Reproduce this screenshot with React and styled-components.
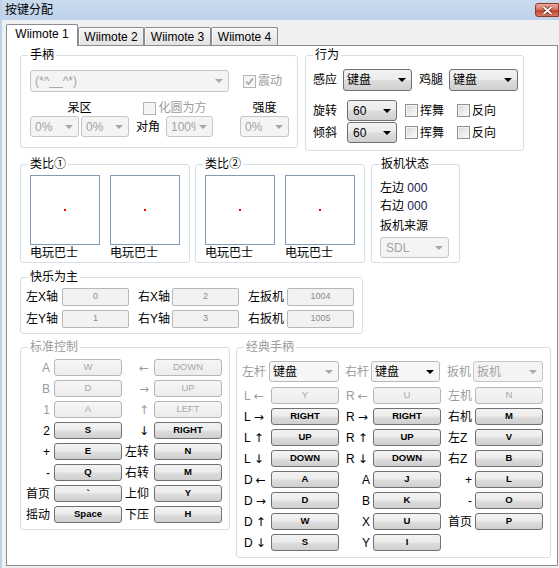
import styled, { createGlobalStyle, css } from 'styled-components'

/* FONT */
const font = `"Liberation Sans", "Noto Sans CJK SC", sans-serif`

/* GLOBAL */
const GlobalStyle = createGlobalStyle`
  html, body {
    margin: 0;
    padding: 0;
    background: #f0f0f0;
  }
  body {
    font-family: ${font};
    font-size: 12px;
    color: #000;
  }
`

/* SHARED OFFSETS */
const offsets = css`
  margin-left: ${({ $ml }) => $ml || 0}px;
  margin-top: ${({ $mt }) => $mt || 0}px;
`

const dimText = '#9c9c9c'

/* WINDOW */
const Window = styled.div`
  width: 559px;
  height: 568px;
  box-sizing: border-box;
  border-left: 2px solid #bcd3ec;
  background: #f0f0f0;
  display: flex;
  flex-direction: column;
  overflow: hidden;
`

/* TITLE BAR */
const TitleBar = styled.div`
  height: 20px;
  flex: none;
  display: flex;
  justify-content: space-between;
  background: linear-gradient(#c9dbef, #bed2ea);
  padding-left: 3px;
`

const TitleText = styled.span`
  line-height: 20px;
  font-size: 12px;
  color: #000;
`

const CloseButton = styled.div`
  width: 24px;
  height: 14px;
  margin-top: 3px;
  box-sizing: border-box;
  border: 1px solid #8a3a31;
  border-radius: 3px 0 0 3px;
  background: linear-gradient(#eaa99b 0%, #d8715e 48%, #c4432d 52%, #d5785f 100%);
  display: flex;
  align-items: center;
  justify-content: center;
`

/* BODY & TABS */
const Body = styled.div`
  flex: 1;
  padding: 4px 0 0 4px;
  display: flex;
  flex-direction: column;
`

const TabStrip = styled.div`
  height: 21px;
  display: flex;
  align-items: flex-end;
  position: relative;
  z-index: 1;
`

const Tab = styled.div`
  box-sizing: border-box;
  width: ${({ $w }) => $w}px;
  height: ${({ $active }) => ($active ? 22 : 18)}px;
  margin-bottom: ${({ $active }) => ($active ? -1 : 0)}px;
  border: 1px solid #898c95;
  border-bottom: none;
  border-radius: 2px 2px 0 0;
  background: ${({ $active }) =>
    $active ? '#fff' : 'linear-gradient(#f4f4f4, #e3e3e3)'};
  box-shadow: ${({ $active }) => ($active ? 'none' : 'inset 1px 1px 0 #fcfcfc')};
  display: flex;
  align-items: center;
  justify-content: center;
  padding-bottom: ${({ $active }) => ($active ? 3 : 0)}px;
  font-size: 12px;
  line-height: 14px;
`

const TabPanel = styled.div`
  width: 552px;
  height: 521px;
  box-sizing: border-box;
  border: 1px solid #898c95;
  background: #fff;
  padding: 9px 0 0 13px;
  display: flex;
  flex-direction: column;
  position: relative;
`

/* ROWS OF GROUPS */
const Row = styled.div`
  display: flex;
  align-items: flex-start;
  gap: ${({ $gap }) => $gap || 0}px;
  ${offsets}
`

/* GROUP BOX */
const Group = styled.div`
  position: relative;
  box-sizing: border-box;
  flex: none;
  width: ${({ $w }) => $w}px;
  height: ${({ $h }) => $h}px;
  border: 1px solid #d5dfe5;
  border-radius: 3px;
  padding-left: ${({ $pl }) => $pl || 0}px;
  ${offsets}
`

const GroupTitle = styled.span`
  position: absolute;
  top: -8px;
  left: 7px;
  padding: 0 2px;
  background: #fff;
  font-size: 12px;
  line-height: 14px;
  color: ${({ $dim }) => ($dim ? dimText : '#000')};
`

/* LINE */
const Line = styled.div`
  display: flex;
  align-items: center;
  ${offsets}
`

/* LABEL */
const Label = styled.span`
  flex: none;
  font-size: 12px;
  line-height: 14px;
  white-space: nowrap;
  color: ${({ $dim }) => ($dim ? dimText : '#000')};
  width: ${({ $w }) => ($w ? `${$w}px` : 'auto')};
  ${offsets}
`

/* CELL */
const Cell = styled.div`
  flex: none;
  width: ${({ $w }) => $w}px;
  display: flex;
  justify-content: center;
  ${offsets}
`

/* COMBO */
const looks = {
  on: {
    border: '#707070',
    bg: 'linear-gradient(#f2f2f2 0%, #ebebeb 48%, #dddddd 52%, #cfcfcf 100%)',
    color: '#000',
  },
  off: { border: '#c6c6c6', bg: '#f4f4f4', color: '#a3a3a3' },
  soft: { border: '#b9b9b9', bg: '#f6f6f6', color: '#000' },
}

const Combo = styled.div`
  flex: none;
  box-sizing: border-box;
  width: ${({ $w }) => $w}px;
  height: ${({ $h }) => $h || 21}px;
  border: 1px solid ${({ $look }) => looks[$look].border};
  border-radius: 3px;
  background: ${({ $look }) => looks[$look].bg};
  color: ${({ $look }) => looks[$look].color};
  display: flex;
  align-items: center;
  padding: 0 5px 0 ${({ $pad }) => $pad || 3}px;
  font-size: 12px;
  line-height: 14px;
  ${offsets}
`

const ComboText = styled.span`
  flex: 1;
  min-width: 0;
  overflow: hidden;
  white-space: nowrap;
`

const Arrow = styled.span`
  flex: none;
  width: 0;
  height: 0;
  margin-left: 3px;
  border-left: 4px solid transparent;
  border-right: 4px solid transparent;
  border-top: 4px solid ${({ $c }) => $c};
`

/* CHECKBOX */
const CheckItem = styled.div`
  flex: none;
  display: flex;
  align-items: center;
  gap: 2px;
  color: ${({ $dim }) => ($dim ? dimText : '#000')};
  font-size: 12px;
  line-height: 14px;
  ${offsets}
`

const CheckBox = styled.span`
  width: 13px;
  height: 13px;
  box-sizing: border-box;
  border: 1px solid ${({ $dim }) => ($dim ? '#b4b4b4' : '#8e8f8f')};
  background: ${({ $dim }) =>
    $dim ? '#f4f4f4' : 'linear-gradient(135deg, #d6d6d6 0%, #eeeeee 60%, #fbfbfb 100%)'};
  box-shadow: inset 0 0 0 1px ${({ $dim }) => ($dim ? '#f7f7f7' : '#f4f4f4')};
  display: flex;
  align-items: center;
  justify-content: center;
`

/* ANALOG */
const AnalogRow = styled.div`
  display: flex;
  gap: 10px;
  padding: 10px 0 0 9px;
`

const AnalogCol = styled.div`
  display: flex;
  flex-direction: column;
`

const AnalogBox = styled.div`
  width: 70px;
  height: 70px;
  box-sizing: border-box;
  border: 1px solid #7f9db9;
  display: flex;
  align-items: center;
  justify-content: center;
`

const Dot = styled.span`
  width: 2px;
  height: 2px;
  background: #ff0000;
`

const Caption = styled.span`
  margin-top: 1px;
  font-size: 12px;
  line-height: 14px;
`

/* TRIGGER STATUS */
const StatusBody = styled.div`
  display: flex;
  flex-direction: column;
  align-items: flex-start;
  padding: 14px 0 0 8px;
`

const StatusLine = styled.span`
  font-size: 12px;
  line-height: 18px;
  ${offsets}
`

const Num = styled.span`
  color: #101a48;
`

/* AXIS FIELDS */
const AxisBody = styled.div`
  display: flex;
  flex-direction: column;
  gap: 4px;
  padding: 10px 0 0 5px;
`

const Field = styled.div`
  flex: none;
  box-sizing: border-box;
  width: 67px;
  height: 18px;
  border: 1px solid #b7b7b7;
  border-radius: 2px;
  background: #f2f2f2;
  color: #8c8c8c;
  font-size: 9px;
  line-height: 14px;
  text-align: center;
`

/* KEY GRID */
const KeyGrid = styled.div`
  display: grid;
  grid-template-columns: ${({ $cols }) => $cols};
  grid-auto-rows: 17px;
  column-gap: ${({ $colGap }) => $colGap || 0}px;
  row-gap: 4px;
  padding-left: ${({ $pl }) => $pl || 0}px;
  ${offsets}
`

const KeyLabel = styled.div`
  display: flex;
  align-items: center;
  justify-content: ${({ $right }) => ($right ? 'flex-end' : 'flex-start')};
  padding: 1px ${({ $pr }) => $pr || 0}px 0 ${({ $pl }) => $pl || 0}px;
  font-size: 12px;
  line-height: 14px;
  white-space: nowrap;
  color: ${({ $dim }) => ($dim ? dimText : '#000')};
`

const ArrowGlyph = styled.span`
  font-family: "DejaVu Sans", sans-serif;
  font-size: 12px;
  margin-left: ${({ $ml }) => $ml || 0}px;
`

const KeyButton = styled.div`
  box-sizing: border-box;
  height: 17px;
  border: 1px solid ${({ $dim }) => ($dim ? '#b3b7ba' : '#707070')};
  border-radius: 3px;
  background: ${({ $dim }) =>
    $dim
      ? 'linear-gradient(#f6f6f6, #ececec)'
      : 'linear-gradient(#f3f3f3 0%, #ebebeb 48%, #dedede 52%, #cfcfcf 100%)'};
  color: ${({ $dim }) => ($dim ? '#a8a8a8' : '#000')};
  font-size: 9.5px;
  font-weight: ${({ $dim }) => ($dim ? 'normal' : 'bold')};
  line-height: 13px;
  text-align: center;
`

/* DATA */
const tabs = [
  { name: 'Wiimote 1', w: 72 },
  { name: 'Wiimote 2', w: 66 },
  { name: 'Wiimote 3', w: 67 },
  { name: 'Wiimote 4', w: 67 },
]

const standard = [
  ['A', 'W', '←', 'DOWN', true],
  ['B', 'D', '→', 'UP', true],
  ['1', 'A', '↑', 'LEFT', true],
  ['2', 'S', '↓', 'RIGHT'],
  ['+', 'E', '左转', 'N'],
  ['-', 'Q', '右转', 'M'],
  ['首页', '`', '上仰', 'Y'],
  ['摇动', 'Space', '下压', 'H'],
]

const classic = [
  [{ l: 'L', a: '←', k: 'Y', dim: true }, { l: 'R', a: '←', k: 'U', dim: true }, { l: '左机', k: 'N', dim: true }],
  [{ l: 'L', a: '→', k: 'RIGHT' }, { l: 'R', a: '→', k: 'RIGHT' }, { l: '右机', k: 'M' }],
  [{ l: 'L', a: '↑', k: 'UP' }, { l: 'R', a: '↑', k: 'UP' }, { l: '左Z', k: 'V' }],
  [{ l: 'L', a: '↓', k: 'DOWN' }, { l: 'R', a: '↓', k: 'DOWN' }, { l: '右Z', k: 'B' }],
  [{ l: 'D', a: '←', k: 'A' }, { l: 'A', k: 'J', r: true }, { l: '+', k: 'L', r: true }],
  [{ l: 'D', a: '→', k: 'D' }, { l: 'B', k: 'K', r: true }, { l: '-', k: 'O', r: true }],
  [{ l: 'D', a: '↑', k: 'W' }, { l: 'X', k: 'U', r: true }, { l: '首页', k: 'P' }],
  [{ l: 'D', a: '↓', k: 'S' }, { l: 'Y', k: 'I', r: true }, null],
]

const isArrow = (s) => '←→↑↓'.includes(s)

/* SMALL PARTS */
function Select({ text, look = 'on', arrow, ...rest }) {
  const c = arrow || (look === 'off' ? '#a8a8a8' : '#000')
  return (
    <Combo $look={look} {...rest}>
      <ComboText>{text}</ComboText>
      <Arrow $c={c} />
    </Combo>
  )
}

function Check({ text, dim, checked, ...rest }) {
  return (
    <CheckItem $dim={dim} {...rest}>
      <CheckBox $dim={dim}>
        {checked && (
          <svg width="9" height="9" viewBox="0 0 9 9">
            <path d="M1 4.5 L3.5 7 L8 1.5" fill="none" stroke="#a4a4a4" strokeWidth="1.6" />
          </svg>
        )}
      </CheckBox>
      {text}
    </CheckItem>
  )
}

function Analog() {
  return (
    <AnalogCol>
      <AnalogBox>
        <Dot />
      </AnalogBox>
      <Caption>电玩巴士</Caption>
    </AnalogCol>
  )
}

/* APP */
export default function App() {
  return (
    <>
      <GlobalStyle />
      <Window>
        {/* TITLE */}
        <TitleBar>
          <TitleText>按键分配</TitleText>
          <CloseButton>
            <svg width="11" height="9" viewBox="0 0 11 9">
              <path d="M1.5 1 L9.5 8 M9.5 1 L1.5 8" stroke="#6b2a22" strokeWidth="3.4" />
              <path d="M1.5 1 L9.5 8 M9.5 1 L1.5 8" stroke="#fff" strokeWidth="1.8" />
            </svg>
          </CloseButton>
        </TitleBar>

        <Body>
          {/* TABS */}
          <TabStrip>
            {tabs.map((t, i) => (
              <Tab key={t.name} $w={t.w} $active={i === 0}>
                {t.name}
              </Tab>
            ))}
          </TabStrip>

          <TabPanel>
            {/* ROW 1 */}
            <Row $gap={7}>
              {/* HANDLE */}
              <Group $w={278} $h={93} $pl={9}>
                <GroupTitle>手柄</GroupTitle>
                <Line $mt={14}>
                  <Select look="off" text="(*^__^*)" $w={199} $h={22} $pad={4} />
                  <Check text="震动" dim checked $ml={14} />
                </Line>
                <Line $mt={9}>
                  <Cell $w={99}>
                    <Label>呆区</Label>
                  </Cell>
                  <Cell $w={76} $ml={8}>
                    <Check text="化圆为方" dim />
                  </Cell>
                  <Cell $w={49} $ml={27}>
                    <Label>强度</Label>
                  </Cell>
                </Line>
                <Line $mt={1}>
                  <Select look="off" text="0%" $w={49} $pad={4} />
                  <Select look="off" text="0%" $w={48} $ml={2} $pad={4} />
                  <Label $ml={7}>对角</Label>
                  <Select look="off" text="100%" $w={47} $ml={6} $pad={4} />
                  <Select look="off" text="0%" $w={49} $ml={27} $pad={4} />
                </Line>
              </Group>

              {/* BEHAVIOUR */}
              <Group $w={219} $h={96} $pl={7}>
                <GroupTitle>行为</GroupTitle>
                <Line $mt={13}>
                  <Label>感应</Label>
                  <Select text="键盘" $w={69} $h={22} $ml={6} />
                  <Label $ml={7}>鸡腿</Label>
                  <Select text="键盘" $w={69} $h={22} $ml={6} />
                </Line>
                <Line $mt={9}>
                  <Label>旋转</Label>
                  <Select text="60" $w={50} $ml={10} $pad={5} />
                  <Check text="挥舞" $ml={8} />
                  <Check text="反向" $ml={13} />
                </Line>
                <Line $mt={1}>
                  <Label>倾斜</Label>
                  <Select text="60" $w={50} $ml={10} $pad={5} />
                  <Check text="挥舞" $ml={8} />
                  <Check text="反向" $ml={13} />
                </Line>
              </Group>
            </Row>

            {/* ROW 2 */}
            <Row $gap={5} $mt={13}>
              <Group $w={170} $h={99}>
                <GroupTitle>类比①</GroupTitle>
                <AnalogRow>
                  <Analog />
                  <Analog />
                </AnalogRow>
              </Group>
              <Group $w={170} $h={99}>
                <GroupTitle>类比②</GroupTitle>
                <AnalogRow>
                  <Analog />
                  <Analog />
                </AnalogRow>
              </Group>
              <Group $w={89} $h={99} $ml={1}>
                <GroupTitle>扳机状态</GroupTitle>
                <StatusBody>
                  <StatusLine>
                    左边 <Num>000</Num>
                  </StatusLine>
                  <StatusLine>
                    右边 <Num>000</Num>
                  </StatusLine>
                  <StatusLine $mt={2}>扳机来源</StatusLine>
                  <Select look="off" text="SDL" $w={69} $mt={2} $pad={5} />
                </StatusBody>
              </Group>
            </Row>

            {/* ROW 3 */}
            <Row $mt={14}>
              <Group $w={343} $h={57}>
                <GroupTitle>快乐为主</GroupTitle>
                <AxisBody>
                  <Line>
                    <Label $w={36}>左X轴</Label>
                    <Field>0</Field>
                    <Label $w={34} $ml={9}>右X轴</Label>
                    <Field>2</Field>
                    <Label $w={39} $ml={9}>左扳机</Label>
                    <Field>1004</Field>
                  </Line>
                  <Line>
                    <Label $w={36}>左Y轴</Label>
                    <Field>1</Field>
                    <Label $w={34} $ml={9}>右Y轴</Label>
                    <Field>3</Field>
                    <Label $w={39} $ml={9}>右扳机</Label>
                    <Field>1005</Field>
                  </Line>
                </AxisBody>
              </Group>
            </Row>

            {/* ROW 4 */}
            <Row $gap={6} $mt={13}>
              {/* STANDARD */}
              <Group $w={210} $h={183}>
                <GroupTitle $dim>标准控制</GroupTitle>
                <KeyGrid $cols="26px 68px 24px 68px" $colGap={4} $pl={3} $mt={11}>
                  {standard.map(([l1, k1, l2, k2, dim]) => [
                    <KeyLabel key={`a${l1}`} $right $dim={dim}>{l1}</KeyLabel>,
                    <KeyButton key={`b${l1}`} $dim={dim}>{k1}</KeyButton>,
                    <KeyLabel key={`c${l1}`} $right $dim={dim} $pr={1}>
                      {isArrow(l2) ? <ArrowGlyph>{l2}</ArrowGlyph> : l2}
                    </KeyLabel>,
                    <KeyButton key={`d${l1}`} $dim={dim}>{k2}</KeyButton>,
                  ])}
                </KeyGrid>
              </Group>

              {/* CLASSIC */}
              <Group $w={315} $h={211} $pl={5}>
                <GroupTitle $dim>经典手柄</GroupTitle>
                <Line $mt={13}>
                  <Label $dim>左杆</Label>
                  <Select look="soft" arrow="#a8a8a8" text="键盘" $w={70} $ml={3} />
                  <Label $dim $ml={6}>右杆</Label>
                  <Select look="soft" text="键盘" $w={69} $ml={2} />
                  <Label $dim $ml={7}>扳机</Label>
                  <Select look="off" text="扳机" $w={70} $ml={2} />
                </Line>
                <KeyGrid $cols="29px 68px 34px 68px 34px 68px" $mt={5}>
                  {classic.map((row, ri) =>
                    row.map((c, ci) =>
                      c
                        ? [
                            <KeyLabel
                              key={`l${ri}${ci}`}
                              $dim={c.dim}
                              $right={c.r}
                              $pr={3}
                              $pl={ci === 0 ? 2 : 7}
                            >
                              {c.l}
                              {c.a && <ArrowGlyph $ml={3}>{c.a}</ArrowGlyph>}
                            </KeyLabel>,
                            <KeyButton key={`k${ri}${ci}`} $dim={c.dim}>
                              {c.k}
                            </KeyButton>,
                          ]
                        : null
                    )
                  )}
                </KeyGrid>
              </Group>
            </Row>
          </TabPanel>
        </Body>
      </Window>
    </>
  )
}
